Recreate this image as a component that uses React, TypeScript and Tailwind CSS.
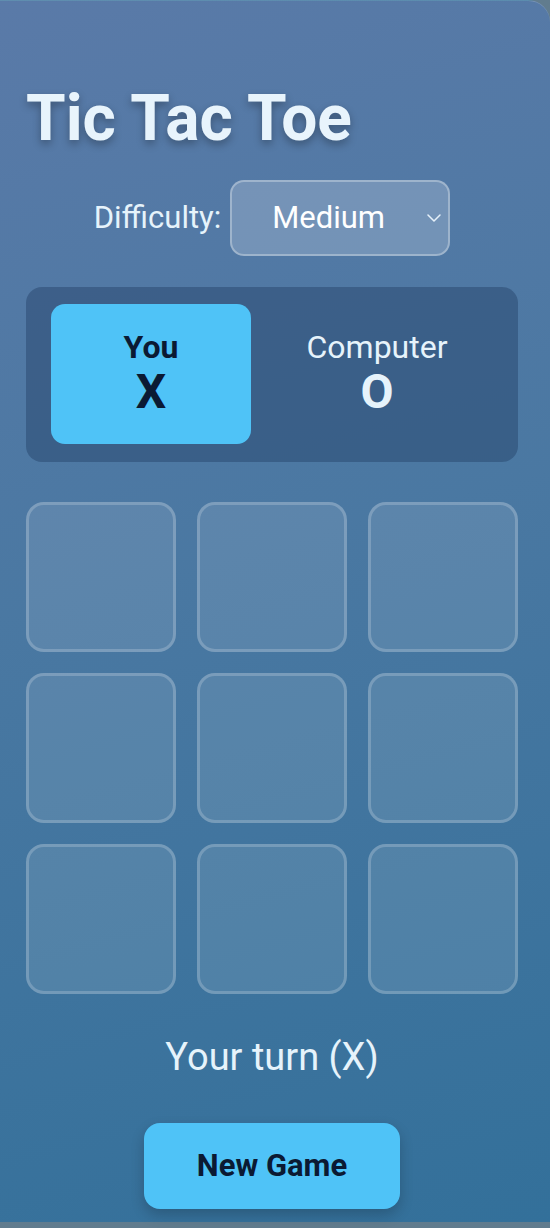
import { useState } from "react";

function ChevronDown() {
  return (
    <svg width="14" height="8" viewBox="0 0 14 8" fill="none">
      <path d="M1 1l6 6 6-6" stroke="#e6f1fa" strokeWidth="1.5" strokeLinecap="round" strokeLinejoin="round" />
    </svg>
  );
}

function Cell({ value, onClick }: { value: string; onClick: () => void }) {
  return (
    <button
      onClick={onClick}
      className="aspect-square rounded-[18px] border-[3px] border-white/20 bg-white/10 text-[64px] font-bold text-[#eaf5fc]"
    >
      {value}
    </button>
  );
}

export default function App() {
  const [board, setBoard] = useState<string[]>(Array(9).fill(""));
  const [difficulty, setDifficulty] = useState("medium");

  return (
    <div className="min-h-[1228px] bg-[#617c8e] font-['Roboto',sans-serif]">
      <div className="h-[1222px] rounded-tr-[22px] border-t border-white/20 bg-[linear-gradient(165deg,#5a7aa8_0%,#4a78a2_45%,#33709a_100%)] pl-[26px] pr-[32px] pt-[80px]">
        <h1 className="text-[64px] font-bold leading-[76px] text-[#e8f4fc] [text-shadow:0_4px_8px_rgba(0,0,0,0.3)]">
          Tic Tac Toe
        </h1>

        <div className="mt-[23px] flex items-center justify-center gap-[9px]">
          <label className="text-[31px] text-[#e6f3fb]">Difficulty:</label>
          <div className="relative">
            <select
              value={difficulty}
              onChange={(e) => setDifficulty(e.target.value)}
              className="h-[76px] w-[220px] appearance-none rounded-[14px] border-2 border-white/30 bg-white/20 pl-[40px] pr-[50px] text-[31px] text-white outline-none"
            >
              <option value="easy">Easy</option>
              <option value="medium">Medium</option>
              <option value="hard">Hard</option>
            </select>
            <span className="pointer-events-none absolute right-[9px] top-[34px]">
              <ChevronDown />
            </span>
          </div>
        </div>

        <div className="mt-[31px] grid grid-cols-[200px_1fr] rounded-[16px] bg-[#1f3a5f]/40 pb-[18px] pt-[17px] pl-[25px] pr-[15px]">
          <div className="flex h-[140px] flex-col items-center justify-center rounded-[14px] bg-[#4fc3f7]">
            <span className="text-[32px] font-bold leading-[36px] text-[#0b1a33]">You</span>
            <span className="text-[48px] font-bold leading-[54px] text-[#0b1a33]">X</span>
          </div>
          <div className="flex flex-col items-center justify-center">
            <span className="text-[32px] leading-[36px] text-[#e6f3fb]">Computer</span>
            <span className="text-[48px] font-bold leading-[54px] text-[#e6f3fb]">O</span>
          </div>
        </div>

        <div className="mt-[40px] grid grid-cols-3 gap-[21px]">
          {board.map((v, i) => (
            <Cell
              key={i}
              value={v}
              onClick={() => {
                if (v) return;
                const next = [...board];
                next[i] = "X";
                setBoard(next);
              }}
            />
          ))}
        </div>

        <p className="mt-[40px] text-center text-[38px] leading-[46px] text-[#e6f3fb]">Your turn (X)</p>

        <div className="mt-[43px] flex justify-center">
          <button
            onClick={() => setBoard(Array(9).fill(""))}
            className="h-[86px] w-[256px] rounded-[16px] bg-[#4fc3f7] text-[31px] font-bold text-[#0b1a33] shadow-[0_6px_14px_rgba(0,0,0,0.2)]"
          >
            New Game
          </button>
        </div>
      </div>
    </div>
  );
}
